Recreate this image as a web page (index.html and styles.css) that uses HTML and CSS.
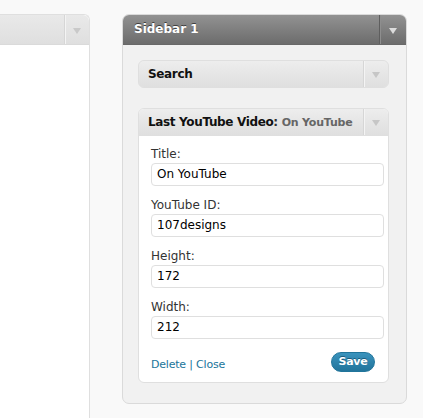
FILE: index.html
```html
<!DOCTYPE html>
<html>
<head>
<meta charset="utf-8">
<link rel="stylesheet" href="styles.css">
</head>
<body>
<div class="page">
  <div class="left-panel">
    <div class="left-head">
      <div class="left-title"></div>
      <div class="toggle light"><span class="arrow pale"></span></div>
    </div>
    <div class="left-body"></div>
  </div>

  <div class="sidebar">
    <div class="sidebar-head">
      <div class="sidebar-title">Sidebar 1</div>
      <div class="toggle dark"><span class="arrow white"></span></div>
    </div>
    <div class="sidebar-body">
      <div class="widget closed">
        <div class="widget-head">
          <div class="widget-title">Search</div>
          <div class="toggle light"><span class="arrow grey"></span></div>
        </div>
      </div>

      <div class="widget open">
        <div class="widget-head">
          <div class="widget-title">Last YouTube Video<span class="colon">:</span> <span class="in-title">On YouTube</span></div>
          <div class="toggle light"><span class="arrow grey"></span></div>
        </div>
        <div class="widget-body">
          <label class="field">
            <span class="label">Title:</span>
            <span class="input">On YouTube</span>
          </label>
          <label class="field">
            <span class="label">YouTube ID:</span>
            <span class="input">107designs</span>
          </label>
          <label class="field">
            <span class="label">Height:</span>
            <span class="input">172</span>
          </label>
          <label class="field">
            <span class="label">Width:</span>
            <span class="input">212</span>
          </label>
          <div class="widget-foot">
            <div class="links"><a href="#">Delete</a> | <a href="#">Close</a></div>
            <button class="save">Save</button>
          </div>
        </div>
      </div>
    </div>
  </div>
</div>
</body>
</html>
```

FILE: styles.css
```css
html, body {
  margin: 0;
  padding: 0;
  background: #f9f9f9;
  font-family: "DejaVu Sans", "Lucida Grande", sans-serif;
  font-size: 12px;
  color: #333;
}

.page {
  display: flex;
  align-items: flex-start;
  padding-top: 14px;
  height: 404px;
}

/* left cut-off panel */
.left-panel {
  width: 89px;
  height: 404px;
  display: flex;
  flex-direction: column;
  border-top: 1px solid #dfdfdf;
  border-right: 1px solid #dfdfdf;
  border-top-right-radius: 6px;
  background: #fff;
  flex: none;
}
.left-head {
  height: 29px;
  display: flex;
  background: linear-gradient(#e9e9e9, #dfdfdf);
  border-top-right-radius: 6px;
  border-bottom: 1px solid #dadada;
}
.left-title { flex: 1; }
.left-body { flex: 1; background: #fff; }

/* toggles */
.toggle {
  width: 24px;
  display: flex;
  align-items: center;
  justify-content: center;
  flex: none;
}
.toggle.light {
  border-left: 1px solid #d6d6d6;
  box-shadow: inset 1px 0 0 #f4f4f4;
}
.toggle.dark {
  width: 26px;
  border-left: 1px solid #5e5e5e;
  box-shadow: inset 1px 0 0 #8e8e8e;
}
.arrow {
  width: 0;
  height: 0;
  border-left: 4px solid transparent;
  border-right: 4px solid transparent;
  border-top: 6px solid #ccc;
  margin-top: 2px;
}
.arrow.pale { border-top-color: #c9c9c9; }
.arrow.grey { border-top-color: #c6c6c6; }
.arrow.white { border-top-color: #dcdcdc; }

/* sidebar */
.sidebar {
  margin-left: 32px;
  width: 283px;
  border: 1px solid #dadada;
  border-radius: 7px;
  background: #f1f1f1;
  flex: none;
}
.sidebar-head {
  height: 29px;
  display: flex;
  background: linear-gradient(#929292, #6c6c6c);
  border-radius: 6px 6px 0 0;
  border-bottom: 1px solid #686868;
}
.sidebar-title {
  flex: 1;
  color: #fff;
  font-weight: bold;
  font-size: 12px;
  line-height: 29px;
  padding-left: 11px;
  text-shadow: 0 -1px 0 #3f3f3f;
}
.sidebar-body {
  padding: 15px 17px 20px 15px;
}

/* widgets */
.widget {
  border: 1px solid #dfdfdf;
  border-radius: 6px;
  background: #fff;
}
.widget.closed {
  margin-bottom: 20px;
  background: #e6e6e6;
}
.widget-head {
  height: 26px;
  display: flex;
  background: linear-gradient(#ededed, #dfdfdf);
  border-radius: 5px;
}
.widget.open .widget-head {
  border-radius: 5px 5px 0 0;
  border-bottom: 1px solid #dfdfdf;
}
.widget-title {
  flex: 1;
  font-weight: bold;
  color: #111;
  line-height: 26px;
  padding-left: 9px;
  font-size: 12px;
  letter-spacing: -0.35px;
  white-space: nowrap;
  overflow: hidden;
}
.colon { color: #333; }
.in-title {
  color: #666;
  font-size: 11px;
  letter-spacing: -0.2px;
}

.widget-body {
  padding: 10px 4px 10px 12px;
}
.field {
  display: block;
  margin-bottom: 11px;
}
.label {
  display: block;
  line-height: 16px;
  margin-bottom: 1px;
  color: #333;
}
.input {
  display: block;
  box-sizing: border-box;
  height: 23px;
  line-height: 21px;
  border: 1px solid #dfdfdf;
  border-radius: 4px;
  background: #fff;
  padding-left: 5px;
  color: #000;
}
.widget-foot {
  display: flex;
  justify-content: space-between;
  align-items: center;
  height: 20px;
  margin-top: 13px;
  padding-right: 9px;
}
.links {
  color: #21759b;
  font-size: 11px;
  letter-spacing: -0.2px;
  padding-top: 5px;
}
.links a {
  color: #21759b;
  text-decoration: none;
}
.save {
  box-sizing: border-box;
  height: 20px;
  width: 44px;
  padding: 0;
  border: 1px solid #21759b;
  border-radius: 11px;
  background: linear-gradient(#3a93bd, #22749b);
  color: #fff;
  font-family: "DejaVu Sans", sans-serif;
  font-weight: bold;
  font-size: 11px;
  letter-spacing: -0.3px;
  text-shadow: 0 -1px 0 #1c5c7c;
  line-height: 18px;
}
```
